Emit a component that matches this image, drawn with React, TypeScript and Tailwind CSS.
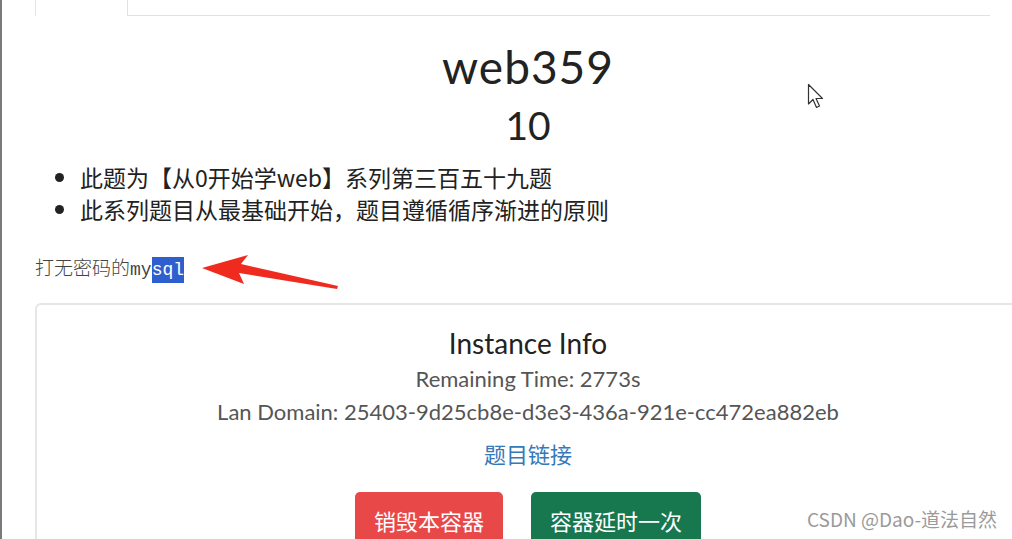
import React from "react";

const lato = { fontFamily: "Lato, 'Noto Sans CJK SC', sans-serif" };
const cjk = { fontFamily: "'Noto Sans CJK SC', Lato, sans-serif" };

function RedArrow() {
  return (
    <svg
      className="absolute left-[196px] top-[252px]"
      width="145"
      height="42"
      viewBox="0 0 145 42"
    >
      <path
        d="M4 16 L50 3 L43 12 L140 34 L139 37 L41 21 L46 32 Z"
        fill="#ef2b1f"
      />
    </svg>
  );
}

function Cursor() {
  return (
    <svg
      className="absolute left-[805px] top-[83px]"
      width="20"
      height="28"
      viewBox="0 0 20 28"
    >
      <path
        d="M1.5 1.5 L1.5 21 L6 16.5 L9.5 24.5 L12.5 23 L9 15.5 L15.5 15.5 Z"
        fill="#fff"
        stroke="#333"
        strokeWidth="1.2"
        strokeLinejoin="round"
      />
    </svg>
  );
}

export default function App() {
  return (
    <div className="relative h-[539px] w-full overflow-hidden bg-white border-l-2 border-[#7a7a7a]">
      {/* tabs */}
      <div className="flex ml-[33px] mr-[22px] h-[16px]">
        <div className="w-[92px] border-l border-[#e4e4e4]"></div>
        <div className="flex-1 border-l border-b border-[#e2e2e2]"></div>
      </div>

      <div className="ml-[33px] w-[986px]" style={lato}>
        <h1 className="text-center text-[46px] leading-[56px] mt-[23px] text-[#222] tracking-[1px]">
          web359
        </h1>
        <h2 className="text-center text-[39px] leading-[48px] mt-[6px] text-[#222]">
          10
        </h2>

        <ul
          className="list-disc pl-[45px] mt-[12px] text-[23px] text-[#222]"
          style={cjk}
        >
          <li className="h-[32px] leading-[32px]">
            此题为【从0开始学web】系列第三百五十九题
          </li>
          <li className="h-[32px] leading-[32px]">
            此系列题目从最基础开始，题目遵循循序渐进的原则
          </li>
        </ul>

        <p className="mt-[28px] h-[27px] text-[19px] leading-[27px] text-[#444]">
          <span className="font-light" style={cjk}>
            打无密码的
          </span>
          <span
            className="text-[18px]"
            style={{ fontFamily: "'Liberation Mono', monospace" }}
          >
            my
            <span className="bg-[#2f5fcf] text-white py-[3px]">sql</span>
          </span>
        </p>

        {/* instance card */}
        <div className="mt-[23px] rounded-[6px] border-2 border-[#e6e6e6] pt-[19px] pb-[20px] text-center">
          <div className="text-[28px] leading-[38px] text-[#222]">
            Instance Info
          </div>
          <div className="text-[22px] leading-[30px] text-[#555] mt-[2px]">
            Remaining Time: 2773s
          </div>
          <div className="text-[22px] leading-[30px] text-[#555] mt-[3px]">
            Lan Domain: 25403-9d25cb8e-d3e3-436a-921e-cc472ea882eb
          </div>
          <div
            className="text-[22px] leading-[32px] text-[#3479b8] mt-[10px]"
            style={cjk}
          >
            题目链接
          </div>
          <div className="flex justify-center gap-[28px] mt-[23px]" style={cjk}>
            <button className="h-[56px] px-[19px] rounded-[5px] bg-[#e84848] text-white text-[22px]">
              销毁本容器
            </button>
            <button className="h-[56px] px-[19px] rounded-[5px] bg-[#17774f] text-white text-[22px]">
              容器延时一次
            </button>
          </div>
        </div>
      </div>

      <RedArrow />
      <Cursor />

      {/* watermark */}
      <div
        className="absolute left-[805px] top-[506px] flex flex-col whitespace-nowrap text-[19px] leading-[26px] text-[#9a9a9a]"
        style={cjk}
      >
        <span>CSDN @Dao-道法自然</span>
        <span className="ml-[18px] mt-[4px] text-[#c4c4c4]">CSDN @Dao-道法自然</span>
      </div>
    </div>
  );
}
